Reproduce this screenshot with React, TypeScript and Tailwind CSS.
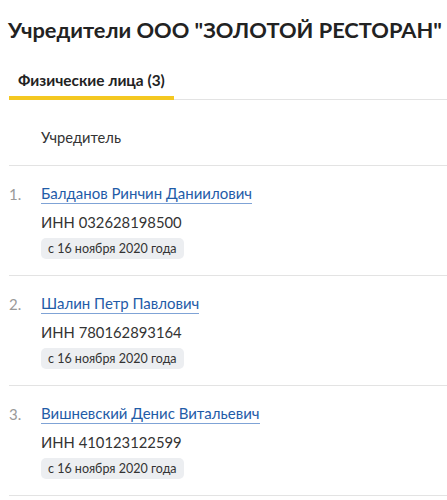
const founders = [
  { name: "Балданов Ринчин Даниилович", inn: "032628198500", since: "с 16 ноября 2020 года" },
  { name: "Шалин Петр Павлович", inn: "780162893164", since: "с 16 ноября 2020 года" },
  { name: "Вишневский Денис Витальевич", inn: "410123122599", since: "с 16 ноября 2020 года" },
];

export default function App() {
  return (
    <div className="min-h-[500px] bg-white font-['Lato',sans-serif] text-[#222]">
      <h1 className="pl-2 pt-4 text-[21.8px] font-bold leading-[28px] whitespace-nowrap">
        Учредители ООО "ЗОЛОТОЙ РЕСТОРАН"
      </h1>

      <div className="ml-[9px] mt-[26px] flex border-b border-[#e3e3e3]">
        <div className="-mb-px border-b-4 border-[#f4c821] px-[9px] pb-[6px] text-[15.4px] font-bold leading-5">
          Физические лица (3)
        </div>
      </div>

      <div className="ml-[9px] border-b border-[#e3e3e3] pb-[18px] pl-8 pt-[27px] text-[14.7px] leading-5 text-[#333]">
        Учредитель
      </div>

      {founders.map((f, i) => (
        <div key={f.inn} className="ml-[9px] flex border-b border-[#e3e3e3] pb-4 pt-[18px]">
          <div className="w-8 text-[15px] leading-5 text-[#9a9a9a]">{i + 1}.</div>
          <div className="flex flex-col items-start">
            <a
              href="#"
              className="border-b border-[#7fa3d6] text-[15px] leading-[19px] text-[#1f5ca8]"
            >
              {f.name}
            </a>
            <div className="mt-2 text-[14.8px] leading-5 text-[#333]">ИНН {f.inn}</div>
            <span className="mt-[6px] rounded-[5px] bg-[#eceef1] px-[7px] text-[12.5px] leading-[21px] text-[#333]">
              {f.since}
            </span>
          </div>
        </div>
      ))}
    </div>
  );
}
